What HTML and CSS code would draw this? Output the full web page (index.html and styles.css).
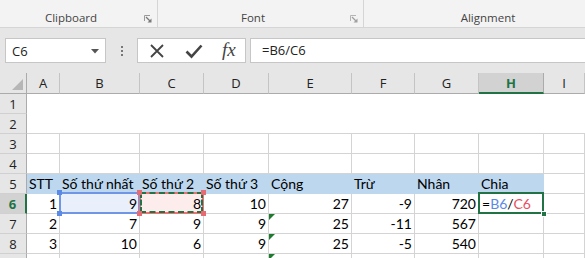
FILE: index.html
```html
<!DOCTYPE html>
<html lang="vi">
<head>
<meta charset="utf-8">
<title>Excel</title>
<link rel="stylesheet" href="styles.css">
</head>
<body>
<div class="app">
  <div class="ribbon">
    <div class="group g-clip">
      <span class="glabel">Clipboard</span>
      <svg class="launcher" width="8" height="8" viewBox="0 0 8 8"><path d="M0.5 6V0.5H6" fill="none" stroke="#9a9a9a"/><path d="M2 2L6 6" stroke="#7a7a7a" stroke-width="1.2"/><path d="M7.5 3.5V7.5H3.5Z" fill="#7a7a7a"/></svg>
    </div>
    <div class="group g-font">
      <span class="glabel">Font</span>
      <svg class="launcher" width="8" height="8" viewBox="0 0 8 8"><path d="M0.5 6V0.5H6" fill="none" stroke="#b5b5b5"/><path d="M2 2L6 6" stroke="#a0a0a0" stroke-width="1.2"/><path d="M7.5 3.5V7.5H3.5Z" fill="#a0a0a0"/></svg>
    </div>
    <div class="group g-align">
      <span class="glabel">Alignment</span>
    </div>
  </div>

  <div class="fbar">
    <div class="namebox">
      <span class="nbtext">C6</span>
      <svg class="nbarrow" width="8" height="5" viewBox="0 0 8 5"><path d="M0 0H8L4 4.5Z" fill="#555"/></svg>
    </div>
    <div class="grip"><i></i><i></i><i></i></div>
    <div class="fbtns">
      <svg class="ico" width="16" height="16" viewBox="0 0 16 16"><path d="M2 2L14 14M14 2L2 14" stroke="#444" stroke-width="1.8" fill="none"/></svg>
      <svg class="ico" width="18" height="16" viewBox="0 0 18 16"><path d="M1.5 8.5L6.5 13.5L16.5 2.5" stroke="#444" stroke-width="2.6" fill="none"/></svg>
      <span class="fx">fx</span>
    </div>
    <div class="finput">=B6/C6</div>
  </div>

  <div class="sheet">
    <div class="corner"></div>
    <div class="ch">A</div>
    <div class="ch">B</div>
    <div class="ch">C</div>
    <div class="ch">D</div>
    <div class="ch">E</div>
    <div class="ch">F</div>
    <div class="ch">G</div>
    <div class="ch ch-active">H</div>
    <div class="ch">I</div>

    <div class="rh">1</div>
    <div class="c merged"></div>
    <div class="rh">2</div>

    <div class="rh">3</div>
    <div class="c"></div><div class="c"></div><div class="c"></div><div class="c"></div><div class="c"></div><div class="c"></div><div class="c"></div><div class="c"></div><div class="c"></div>

    <div class="rh">4</div>
    <div class="c"></div><div class="c"></div><div class="c"></div><div class="c"></div><div class="c"></div><div class="c"></div><div class="c"></div><div class="c"></div><div class="c"></div>

    <div class="rh">5</div>
    <div class="c hdr">STT</div>
    <div class="c hdr">Số thứ nhất</div>
    <div class="c hdr">Số thứ 2</div>
    <div class="c hdr">Số thứ 3</div>
    <div class="c hdr">Cộng</div>
    <div class="c hdr">Trừ</div>
    <div class="c hdr">Nhân</div>
    <div class="c hdr">Chia</div>
    <div class="c"></div>

    <div class="rh rh-active">6</div>
    <div class="c num">1</div>
    <div class="c num ref-b">9<span class="box"></span><span class="sq tl"></span><span class="sq tr"></span><span class="sq bl"></span><span class="sq br"></span></div>
    <div class="c num ref-c">8<span class="box"></span><span class="ants"></span><span class="sq tl"></span><span class="sq tr"></span><span class="sq bl"></span><span class="sq br"></span></div>
    <div class="c num">10</div>
    <div class="c num">27</div>
    <div class="c num">-9</div>
    <div class="c num">720</div>
    <div class="c active">=<span class="rb">B6</span>/<span class="rc">C6</span><span class="frame"></span><span class="handle"></span></div>
    <div class="c"></div>

    <div class="rh">7</div>
    <div class="c num">2</div>
    <div class="c num">7</div>
    <div class="c num">9</div>
    <div class="c num">9</div>
    <div class="c num err">25</div>
    <div class="c num">-11</div>
    <div class="c num">567</div>
    <div class="c"></div>
    <div class="c"></div>

    <div class="rh">8</div>
    <div class="c num">3</div>
    <div class="c num">10</div>
    <div class="c num">6</div>
    <div class="c num">9</div>
    <div class="c num err">25</div>
    <div class="c num">-5</div>
    <div class="c num">540</div>
    <div class="c"></div>
    <div class="c"></div>

    <div class="rh"></div>
    <div class="c"></div><div class="c"></div><div class="c"></div><div class="c"></div>
    <div class="c err"></div>
    <div class="c"></div><div class="c"></div><div class="c"></div><div class="c"></div>
  </div>
</div>
</body>
</html>
```

FILE: styles.css
```css
* { box-sizing: border-box; }
html, body { margin: 0; padding: 0; }
body {
  width: 585px;
  height: 258px;
  overflow: hidden;
  background: #fff;
  font-family: "Open Sans", "Noto Sans", sans-serif;
}
.app { width: 585px; height: 258px; overflow: hidden; }

/* ribbon */
.ribbon {
  height: 28px;
  background: #f3f3f3;
  border-bottom: 1px solid #d5d5d5;
  display: flex;
  overflow: hidden;
}
.group {
  position: relative;
  flex: none;
  height: 27px;
  display: flex;
  align-items: flex-end;
  justify-content: center;
  padding: 0 15px 1px 0;
  border-right: 1px solid #d5d5d5;
}
.g-clip { width: 158px; }
.g-font { width: 206px; }
.g-align { width: 263px; border-right: none; }
.glabel {
  font-size: 11.5px;
  line-height: 16px;
  color: #444;
}
.launcher {
  position: absolute;
  right: 5px;
  bottom: 4px;
}

/* formula bar */
.fbar {
  height: 45px;
  background: #e6e6e6;
  display: flex;
  align-items: flex-start;
  padding: 10px 0 0 5px;
}
.namebox {
  width: 101px;
  height: 25px;
  background: #fff;
  border: 1px solid #c6c6c6;
  display: flex;
  align-items: center;
  justify-content: space-between;
  padding: 0 6px 0 6px;
}
.nbtext { font-size: 13px; color: #222; }
.nbarrow { margin-top: 1px; }
.grip {
  width: 31px;
  height: 25px;
  display: flex;
  flex-direction: column;
  align-items: center;
  justify-content: center;
  gap: 2px;
}
.grip i {
  display: block;
  width: 2px;
  height: 2px;
  background: #777;
}
.fbtns {
  width: 109px;
  height: 25px;
  background: #fff;
  border: 1px solid #c6c6c6;
  display: flex;
  align-items: center;
  padding: 0 0 0 11px;
  gap: 0;
}
.fbtns .ico:first-child { margin-right: 20px; }
.fbtns .ico:nth-child(2) { margin-right: 19px; }
.fx {
  font-family: "Liberation Serif", "DejaVu Serif", serif;
  font-style: italic;
  font-size: 19px;
  line-height: 20px;
  color: #444;
  margin-top: -1px;
}
.finput {
  flex: 1;
  height: 25px;
  margin-left: 4px;
  background: #fff;
  border-top: 1px solid #c6c6c6;
  border-bottom: 1px solid #c6c6c6;
  border-left: 1px solid #c6c6c6;
  font-size: 13px;
  line-height: 23px;
  padding-left: 11px;
  color: #222;
}

/* sheet */
.sheet {
  display: grid;
  grid-template-columns: 27px 33px 80px 64px 65px 83px 63px 64px 65px 1fr;
  grid-template-rows: 21px repeat(9, 20px);
  background: #fff;
}
.corner {
  background: #e6e6e6;
  border-right: 1px solid #ababab;
  border-bottom: 1px solid #ababab;
  position: relative;
}
.corner::after {
  content: "";
  position: absolute;
  right: 3px;
  bottom: 3px;
  width: 0;
  height: 0;
  border-left: 11px solid transparent;
  border-bottom: 11px solid #b6b6b6;
}
.ch {
  background: #e6e6e6;
  border-right: 1px solid #c4c4c4;
  border-bottom: 1px solid #ababab;
  font-size: 13px;
  line-height: 20px;
  text-align: center;
  color: #222;
}
.ch-active {
  background: #d2d2d2;
  color: #217346;
  font-weight: bold;
  border-bottom: 2px solid #217346;
  border-right-color: #ababab;
}
.rh {
  background: #e6e6e6;
  border-right: 1px solid #ababab;
  border-bottom: 1px solid #d0d0d0;
  font-size: 13px;
  line-height: 20px;
  text-align: center;
  color: #222;
}
.rh-active {
  background: #d2d2d2;
  color: #217346;
  font-weight: bold;
  border-right: 2px solid #217346;
}
.c {
  position: relative;
  border-right: 1px solid #d4d4d4;
  border-bottom: 1px solid #d4d4d4;
  font-family: Lato, "Liberation Sans", sans-serif;
  font-size: 14px;
  line-height: 19px;
  padding: 0 2px;
  color: #000;
  white-space: nowrap;
}
.merged {
  grid-column: 2 / -1;
  grid-row: 2 / span 2;
  border-right: none;
}
.num { text-align: right; }
.hdr {
  background: #bdd7ee;
  border-color: #bdd7ee;
  padding-left: 2px;
  overflow: visible;
}

/* reference highlights */
.ref-b { background: #e9f0fc; }
.ref-c { background: #fdecec; }
.box {
  position: absolute;
  left: -1px;
  top: -2px;
  right: -1px;
  bottom: -1px;
  pointer-events: none;
}
.ref-b .box { border: 2px solid #6f96e6; }
.ref-c .box { border: 2px solid #e87474; }
.ants {
  position: absolute;
  left: 0;
  top: -2px;
  right: 0;
  bottom: 0;
  border: 2px dashed #217346;
}
.sq {
  position: absolute;
  width: 5px;
  height: 5px;
  z-index: 2;
}
.ref-b .sq { background: #5b8ae6; }
.ref-c .sq { background: #e86a72; }
.sq.tl { left: -3px; top: -4px; }
.sq.tr { right: -3px; top: -4px; }
.sq.bl { left: -3px; bottom: -3px; }
.sq.br { right: -3px; bottom: -3px; }

.active { padding-left: 3px; }
.rb { color: #5b8ae6; }
.rc { color: #e8505f; }
.frame {
  position: absolute;
  left: -1px;
  top: -2px;
  right: -1px;
  bottom: -1px;
  border: 2px solid #217346;
}
.handle {
  position: absolute;
  right: -4px;
  bottom: -4px;
  width: 6px;
  height: 6px;
  background: #217346;
  border: 1px solid #fff;
  z-index: 3;
}
.err::before {
  content: "";
  position: absolute;
  left: 0;
  top: 0;
  width: 0;
  height: 0;
  border-top: 6px solid #1e7a2e;
  border-right: 6px solid transparent;
}
```
